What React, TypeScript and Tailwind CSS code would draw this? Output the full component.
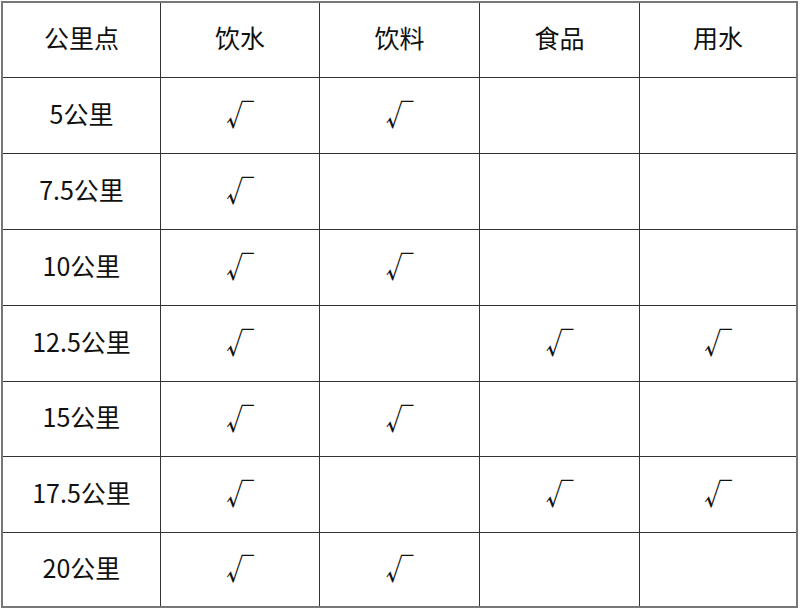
const header = ['公里点', '饮水', '饮料', '食品', '用水']

const rows: [string, boolean, boolean, boolean, boolean][] = [
  ['5公里', true, true, false, false],
  ['7.5公里', true, false, false, false],
  ['10公里', true, true, false, false],
  ['12.5公里', true, false, true, true],
  ['15公里', true, true, false, false],
  ['17.5公里', true, false, true, true],
  ['20公里', true, true, false, false],
]

function Check() {
  return <span className="text-[28px] leading-none mb-[3px]">√</span>
}

export default function App() {
  const cell = 'flex items-center justify-center border-[#333]'
  return (
    <div className="w-[800px] h-[610px] bg-white pt-px pl-px [font-family:'Noto_Sans_CJK_SC',sans-serif] text-[25px] text-[#111]">
      <div className="w-[797px] h-[607px] border-2 border-[#777] grid grid-cols-[158px_159px_160px_160px_1fr] grid-rows-[75px_76px_76px_76px_76px_75px_76px_1fr]">
        {header.map((h, i) => (
          <div key={h} className={`${cell} pb-1 border-b ${i < 4 ? 'border-r' : ''}`}>{h}</div>
        ))}
        {rows.map((r, ri) => (
          <>
            <div key={r[0]} className={`${cell} pb-1 border-r ${ri < rows.length - 1 ? 'border-b' : ''}`}>{r[0]}</div>
            {r.slice(1).map((v, ci) => (
              <div key={r[0] + ci} className={`${cell} ${ci < 3 ? 'border-r' : ''} ${ri < rows.length - 1 ? 'border-b' : ''}`}>
                {v && <Check />}
              </div>
            ))}
          </>
        ))}
      </div>
    </div>
  )
}
